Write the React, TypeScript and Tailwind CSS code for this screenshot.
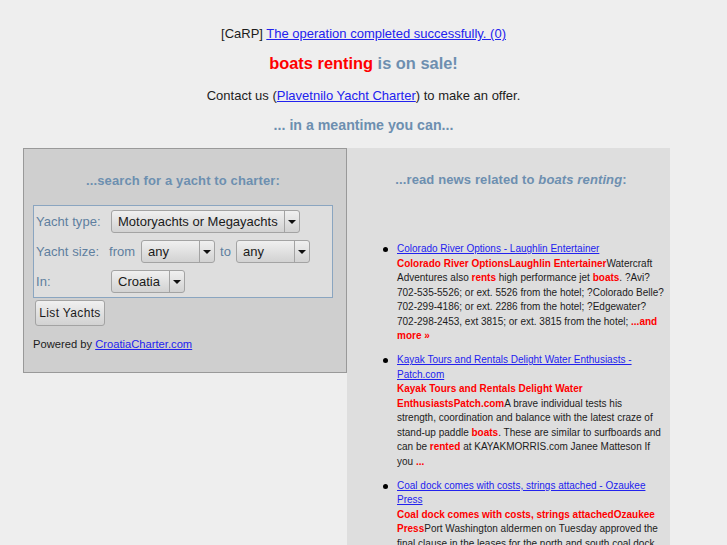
const font = "font-['Liberation_Sans',Arial,sans-serif]";

function Select({ label, width, arrowAt }: { label: string; width: string; arrowAt: string }) {
  return (
    <div className={`${width} h-[23px] flex rounded-[3px] border border-[#a3a3a3] bg-gradient-to-b from-[#f0f0f0] to-[#d2d2d2] text-[13px] text-[#1a1a1a] tracking-normal whitespace-nowrap`}>
      <div className={`${arrowAt} flex-none pl-[6px] leading-[21px] border-r border-[#a3a3a3]`}>{label}</div>
      <div className="flex-1 flex items-center justify-center">
        <svg width="8" height="4" viewBox="0 0 8 4"><path d="M0 0h8L4 4z" fill="#111" /></svg>
      </div>
    </div>
  );
}

function NewsItem({ title, className, children }: { title: string; className?: string; children: React.ReactNode }) {
  return (
    <li className={`mb-[9.5px] relative ${className ?? ""}`}>
      <span className="absolute left-[-14px] top-[5px] w-[5px] h-[5px] rounded-full bg-black" />
      <a href="#" className="text-[#2222ee] underline">{title}</a>
      <br />
      {children}
    </li>
  );
}

const Hot = ({ children }: { children: React.ReactNode }) => <b className="text-[#ff0000]">{children}</b>;

export default function App() {
  return (
    <div className={`${font} w-[727px] h-[545px] overflow-hidden bg-[#eeeeee] text-[13px] text-[#1c1c1c]`}>
      <div className="pt-[26px] text-center">
        <p className="leading-[16px]">
          [CaRP] <a href="#" className="text-[#2222ee] underline">The operation completed successfully. (0)</a>
        </p>
        <p className="mt-[11px] text-[16.4px] leading-[20px] font-bold text-[#6d8fb0]">
          <span className="text-[#ff0000]">boats renting</span> is on sale!
        </p>
        <p className="mt-[15px] leading-[16px]">
          Contact us (<a href="#" className="text-[#2222ee] underline">Plavetnilo Yacht Charter</a>) to make an offer.
        </p>
        <p className="mt-[12px] text-[14.2px] leading-[18px] font-bold text-[#6d8fb0]">... in a meantime you can...</p>
      </div>

      <div className="mt-[14px] ml-[23px] flex items-start">
        <div className="w-[324px] h-[225px] border border-[#999999] bg-[#cfcfcf] px-[9px]">
          <p className="mt-[24px] pr-[4px] text-center text-[13px] leading-[16px] font-bold text-[#6d8fb0] tracking-[0.12px]">
            ...search for a yacht to charter:
          </p>
          <div className="mt-[16px] w-[300px] h-[93px] border border-[#8aa5c0] bg-[#dedede] text-[#5f7f9f] tracking-[0.05px] pl-[2px] pt-[4px] flex flex-col gap-[7px]">
            <div className="flex items-center h-[23px]">
              <span className="w-[75px]">Yacht type:</span>
              <Select label="Motoryachts or Megayachts" width="w-[189px]" arrowAt="w-[173px]" />
            </div>
            <div className="flex items-center h-[23px]">
              <span className="w-[73px]">Yacht size:</span>
              <span className="w-[32px]">from</span>
              <Select label="any" width="w-[74px]" arrowAt="w-[58px]" />
              <span className="w-[21px] text-center">to</span>
              <Select label="any" width="w-[74px]" arrowAt="w-[58px]" />
            </div>
            <div className="flex items-center h-[23px]">
              <span className="w-[75px]">In:</span>
              <Select label="Croatia" width="w-[74px]" arrowAt="w-[58px]" />
            </div>
          </div>
          <button className="mt-[2px] ml-[2px] block w-[70px] h-[26px] rounded-[3px] border border-[#a3a3a3] bg-gradient-to-b from-[#f0f0f0] to-[#d2d2d2] text-[12px] tracking-[0.35px] text-[#1a1a1a]">
            List Yachts
          </button>
          <p className="mt-[11px] text-[11.2px] leading-[14px]">
            Powered by <a href="#" className="text-[#2222ee] underline">CroatiaCharter.com</a>
          </p>
        </div>

        <div className="w-[323px] h-[400px] bg-[#dedede] px-[9px]">
          <p className="mt-[24px] pl-[5px] text-center text-[13px] leading-[16px] font-bold text-[#6d8fb0] tracking-[0.12px]">
            ...read news related to <i>boats renting</i>:
          </p>
          <ul className="mt-[54px] pl-[41px] text-[10px] leading-[14.5px]">
            <NewsItem title="Colorado River Options - Laughlin Entertainer" className="mr-[-4px]">
              <Hot>Colorado River OptionsLaughlin Entertainer</Hot>Watercraft Adventures also <Hot>rents</Hot> high performance jet <Hot>boats</Hot>. ?Avi? 702-535-5526; or ext. 5526 from the hotel; ?Colorado Belle? 702-299-4186; or ext. 2286 from the hotel; ?Edgewater? 702-298-2453, ext 3815; or ext. 3815 from the hotel; <Hot>...and more »</Hot>
            </NewsItem>
            <NewsItem title="Kayak Tours and Rentals Delight Water Enthusiasts - Patch.com">
              <Hot>Kayak Tours and Rentals Delight Water EnthusiastsPatch.com</Hot>A brave individual tests his strength, coordination and balance with the latest craze of stand-up paddle <Hot>boats</Hot>. These are similar to surfboards and can be <Hot>rented</Hot> at KAYAKMORRIS.com Janee Matteson If you <Hot>...</Hot>
            </NewsItem>
            <NewsItem title="Coal dock comes with costs, strings attached - Ozaukee Press">
              <Hot>Coal dock comes with costs, strings attachedOzaukee Press</Hot>Port Washington aldermen on Tuesday approved the final clause in the leases for the north and south coal dock
            </NewsItem>
          </ul>
        </div>
      </div>
    </div>
  );
}
